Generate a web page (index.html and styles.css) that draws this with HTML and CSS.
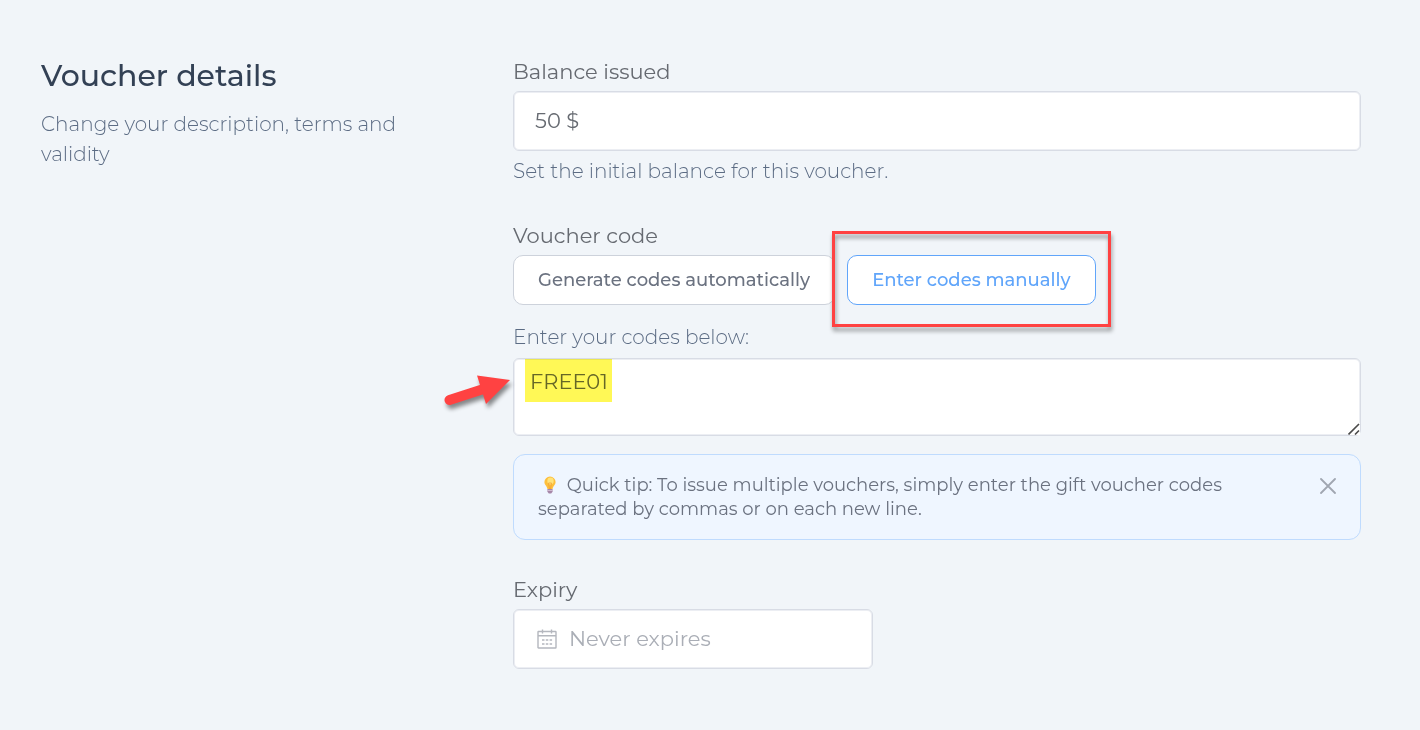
FILE: index.html
```html
<!DOCTYPE html>
<html lang="en">
<head>
    <meta charset="UTF-8">
    <meta name="viewport" content="width=device-width, initial-scale=1.0">
    <title>Voucher details</title>
    <link rel="stylesheet" href="styles.css">
</head>
<body>
    <main class="settings">
        <header class="intro">
            <h1>Voucher details</h1>
            <p>Change your description, terms and validity</p>
        </header>

        <form class="fields">
            <div class="field">
                <label for="balance">Balance issued</label>
                <input class="box" type="text" id="balance" name="balance" value="50 $">
                <p class="hint">Set the initial balance for this voucher.</p>
            </div>

            <div class="field">
                <span class="label" id="codeLabel">Voucher code</span>
                <div class="modes" role="group" aria-labelledby="codeLabel">
                    <button type="button" class="mode">Generate codes automatically</button>
                    <div class="callout">
                        <button type="button" class="mode active">Enter codes manually</button>
                    </div>
                </div>
                <label class="hint codes-hint" for="codes">Enter your codes below:</label>
                <div class="codes">
                    <textarea class="box" id="codes" name="codes">FREE01</textarea>
                    <span class="marker"></span>
                    <svg class="grip" viewBox="0 0 12 12" aria-hidden="true">
                        <path d="M0 0h12v12H0z" fill="#fff"/>
                        <path d="M.5 11.500L11 1M7 11.500L11 7.500" fill="none" stroke="#4a4a4a" stroke-width="1.600"/>
                    </svg>
                    <svg class="arrow" viewBox="0 0 68 34" aria-hidden="true">
                        <path d="M6.500 25L39 14.500" stroke="#ff4242" stroke-width="10" stroke-linecap="round"/>
                        <path d="M34 0.500L67 5L43 29Z" fill="#ff4242"/>
                    </svg>
                </div>
                <div class="tip">
                    <p>
                        <svg class="bulb" viewBox="0 0 24 18" aria-hidden="true">
                            <path d="M12 0.500a5.600 5.600 0 0 0-5.600 5.600c0 3 2.800 4.200 3 7h5.200c.2-2.800 3-4 3-7A5.600 5.600 0 0 0 12 .5z" fill="#fdbf3c"/>
                            <ellipse cx="12.500" cy="5" rx="3.200" ry="3.400" fill="#ffe37a"/>
                            <path d="M10.500 7l1 6M13.500 7l-1 6M10.500 7h3" stroke="#f29b2e" stroke-width=".7" fill="none"/>
                            <path d="M9.400 13h5.200v2.800l-1.400 1.700h-2.400l-1.400-1.700z" fill="#a587a8"/>
                            <path d="M9.400 14.500h5.200" stroke="#d9c7dc" stroke-width=".8"/>
                        </svg>
                        Quick tip: To issue multiple vouchers, simply enter the gift voucher codes separated by commas or on each new line.
                    </p>
                    <button type="button" class="close" aria-label="Close">
                        <svg viewBox="0 0 16 16" aria-hidden="true">
                            <path d="M1 1L15 15M15 1L1 15" stroke="#a0a6b1" stroke-width="1.800" stroke-linecap="round"/>
                        </svg>
                    </button>
                </div>
            </div>

            <div class="field">
                <label for="expiry">Expiry</label>
                <div class="box date">
                    <svg viewBox="0 0 20 20" aria-hidden="true" fill="none" stroke="#b4b7be" stroke-width="1.400">
                        <rect x="1" y="2.500" width="18" height="16.500" rx=".5"/>
                        <path d="M1 6.800h18M5.500 .5v4M14.500 .5v4"/>
                        <path d="M5 11h2.500M8.800 11h2.500M12.600 11h2.500M5 15h2.500M8.800 15h2.500M12.600 15h2.500" stroke-width="1.600"/>
                    </svg>
                    <input type="text" id="expiry" name="expiry" placeholder="Never expires">
                </div>
            </div>
        </form>
    </main>
</body>
</html>
```

FILE: styles.css
```css
* {
    box-sizing: border-box;
}

body {
    margin: 0;
    background-color: #f1f5f9;
    color: #666a71;
    font-family: Montserrat, Inter, sans-serif;
    font-size: 21px;
    line-height: 30px;
}

h1,
p {
    margin: 0;
}

input,
textarea,
button {
    font-family: inherit;
    color: inherit;
}

/* Page columns */
.settings {
    display: grid;
    grid-template-columns: 1fr 2fr;
    gap: 48px;
    padding: 57px 59px 57px 41px;
}

.intro h1 {
    margin-bottom: 14px;
    font-size: 30px;
    font-weight: 500;
    line-height: 38px;
    color: #334155;
}

.intro p {
    max-width: 370px;
    font-size: 20px;
    font-weight: 300;
    color: #5c6c84;
}

/* Fields */
.fields {
    display: flex;
    flex-direction: column;
    gap: 35px;
}

.field {
    display: flex;
    flex-direction: column;
}

.field > label,
.label {
    margin-bottom: 4px;
}

.box {
    width: 100%;
    height: 60px;
    padding: 0 21px 2px;
    border: 1px solid #d8dce5;
    border-radius: 6px;
    background-color: #fff;
    box-shadow: inset 0 0 0 1px #eceef3;
    font-size: 21px;
}

.field .hint {
    margin-top: 5px;
    font-size: 20px;
    font-weight: 300;
    color: #5c6c84;
}

.field .codes-hint {
    margin-top: 17px;
    margin-bottom: 6px;
}

/* Code mode buttons */
.modes {
    display: flex;
    gap: 12px;
}

.mode {
    height: 50px;
    padding: 0 24px;
    border: 1px solid #cdd2db;
    border-radius: 10px;
    background-color: #fff;
    font-size: 18px;
    font-weight: 500;
    color: #6b7280;
    cursor: pointer;
}

.mode.active {
    border-color: #60a5fa;
    color: #60a5fa;
}

.callout {
    position: relative;
}

.callout::after {
    content: "";
    position: absolute;
    inset: -24px -15px -22px;
    border: 3px solid #ff4242;
    filter: drop-shadow(1px 4px 2px rgba(0, 0, 0, 0.4));
    pointer-events: none;
}

/* Codes list */
.codes {
    position: relative;
    height: 78px;
}

.codes textarea {
    display: block;
    height: 78px;
    padding: 8px 16px;
    line-height: 30px;
    resize: vertical;
}

.marker {
    position: absolute;
    top: 1px;
    left: 12px;
    width: 87px;
    height: 43px;
    background-color: #fff856;
    mix-blend-mode: multiply;
    pointer-events: none;
}

.grip {
    position: absolute;
    right: 1px;
    bottom: 1px;
    width: 12px;
    height: 12px;
    pointer-events: none;
}

.arrow {
    position: absolute;
    top: 17px;
    left: -70px;
    width: 68px;
    height: 34px;
    overflow: visible;
    filter: drop-shadow(2px 4px 2px rgba(0, 0, 0, 0.45));
}

/* Tip */
.tip {
    display: flex;
    align-items: flex-start;
    justify-content: space-between;
    margin-top: 18px;
    padding: 18px 24px;
    border: 1px solid #bfdbfe;
    border-radius: 12px;
    background-color: #eff6ff;
}

.tip p {
    max-width: 720px;
    font-size: 18px;
    line-height: 24px;
    color: #6b7280;
}

.bulb {
    width: 24px;
    height: 18px;
    vertical-align: -3px;
}

.close {
    display: flex;
    margin-top: 5px;
    padding: 0;
    border: none;
    background: none;
    cursor: pointer;
}

.close svg {
    width: 16px;
    height: 16px;
}

/* Expiry */
.date {
    display: flex;
    align-items: center;
    gap: 12px;
    max-width: 360px;
    padding: 0 23px;
}

.date svg {
    flex: none;
    width: 20px;
    height: 20px;
}

.date input {
    flex: 1;
    min-width: 0;
    padding: 0 0 2px;
    border: none;
    outline: none;
    background: none;
    font-size: 21px;
}

.date input::placeholder {
    color: #aaaeb6;
}

@media (max-width: 800px) {
    .settings {
        grid-template-columns: 1fr;
        padding: 24px;
    }

    .modes {
        flex-wrap: wrap;
    }
}
```
